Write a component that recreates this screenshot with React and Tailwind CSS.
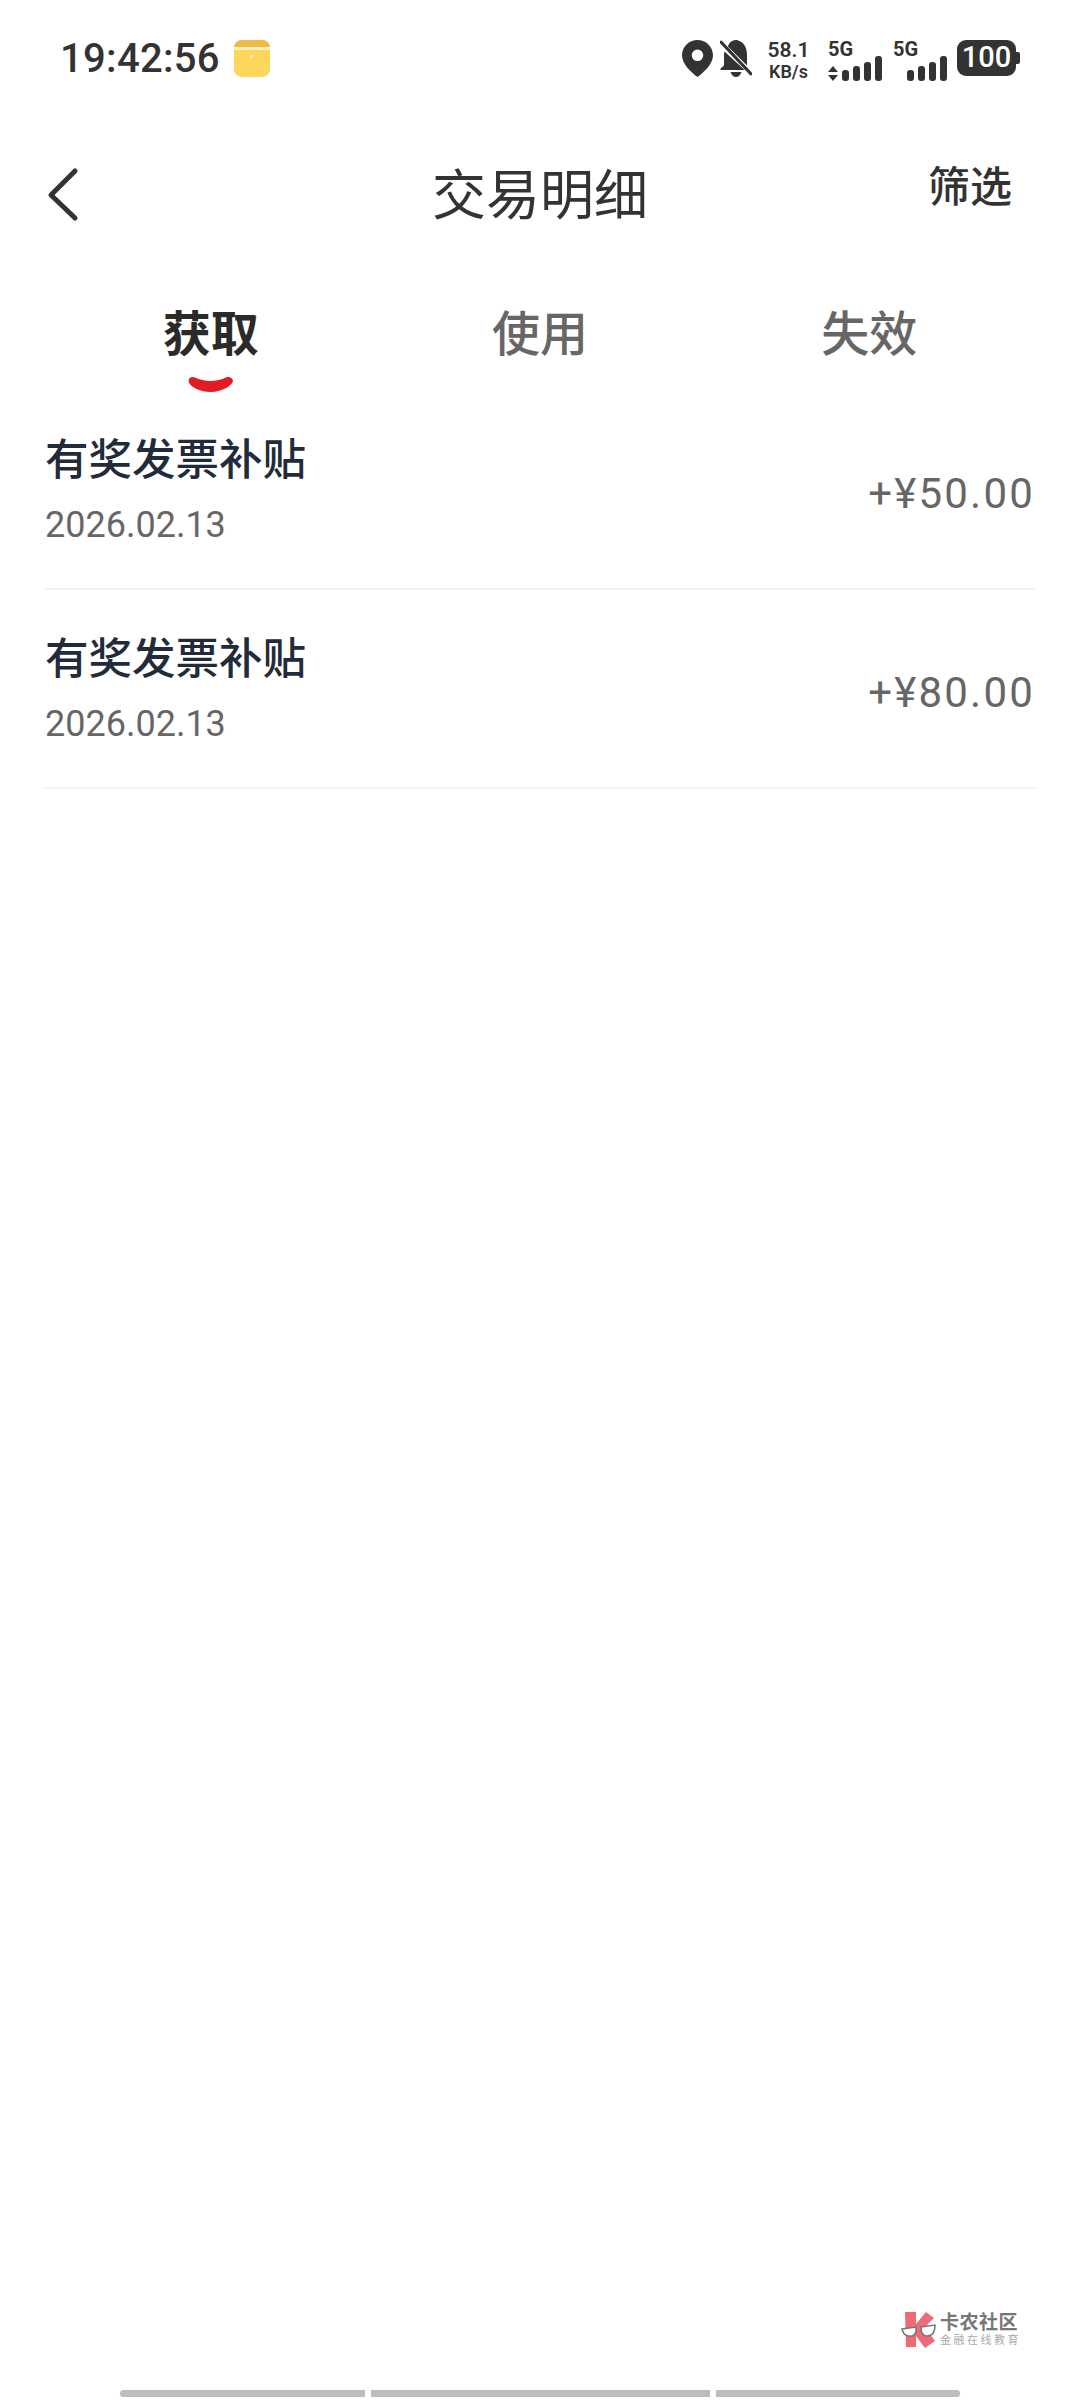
const cjk = 'font-["Roboto","Noto_Sans_CJK_SC",sans-serif]';

const rows = [
  { title: '有奖发票补贴', date: '2026.02.13', amount: '+¥50.00' },
  { title: '有奖发票补贴', date: '2026.02.13', amount: '+¥80.00' },
];

function SignalBars() {
  return (
    <div className="flex items-end gap-[4px]">
      <div className="h-[11px] w-[7px] rounded-[3px] bg-[#333]" />
      <div className="h-[15px] w-[7px] rounded-[3px] bg-[#333]" />
      <div className="h-[19px] w-[7px] rounded-[3px] bg-[#333]" />
      <div className="h-[25px] w-[7px] rounded-[3px] bg-[#333]" />
    </div>
  );
}

function StatusBar() {
  return (
    <div className="flex h-[112px] items-start justify-between pt-[40px] pl-[60px] pr-[60px]">
      <div className="flex items-center gap-[14px]">
        <span className="text-[40px] leading-[36px] font-medium tracking-[0.3px] text-[#333]">19:42:56</span>
        {/* note app icon */}
        <div className="relative h-[37px] w-[36px] overflow-hidden rounded-[8px] bg-[#fdd65a]">
          <div className="h-[7px] bg-[#ecbc48]" />
          <div className="h-[3px] bg-[#fff0bd]" />
          <div className="mx-auto mt-[5px] h-[3px] w-[3px] bg-[#fff3c8]" />
        </div>
      </div>
      <div className="flex items-start text-[#333]">
        <svg className="h-[37px] w-[31px]" viewBox="0 0 31 37">
          <path
            fillRule="evenodd"
            fill="#333"
            d="M15.5 0C7 0 0 6.8 0 15.2 0 24 8.500 31.500 15.500 37 22.500 31.500 31 24 31 15.200 31 6.800 24 0 15.500 0ZM15.500 9.500a5.800 5.800 0 1 1 0 11.600 5.800 5.800 0 0 1 0-11.600Z"
          />
        </svg>
        <svg className="ml-[7px] h-[37px] w-[32px]" viewBox="0 0 32 37">
          <path
            fill="#333"
            d="M16 0c-1.500 0-3 .5-4.300 1.300-2 1.200-3.200 3-3.800 5.200L27 25.600V15c0-6-2-11-6.500-13.500C19 .6 17.500 0 16 0ZM4.500 11.500C4 13 4 14 4 15v10.500L.5 28.500V30h24.200ZM10.500 32h11c-1 3-3 5-5.500 5s-4.500-2-5.500-5Z"
          />
          <path d="M1 2 31 34" stroke="#333" strokeWidth="3" fill="none" strokeLinecap="round" />
        </svg>
        <div className="ml-[16px] flex w-[41px] flex-col items-center font-semibold">
          <span className="text-[21px] leading-[20px]">58.1</span>
          <span className="mt-[3px] text-[18px] leading-[18px]">KB/s</span>
        </div>
        <div className="ml-[19px] flex w-[54px] flex-col">
          <span className="text-[20px] leading-[19px] font-bold">5G</span>
          <div className="mt-[-3px] flex items-end gap-[4px]">
            <svg className="h-[15px] w-[10px]" viewBox="0 0 10 15">
              <path fill="#333" d="M5 0 10 6H0ZM0 9H10L5 15Z" />
            </svg>
            <SignalBars />
          </div>
        </div>
        <div className="ml-[11px] flex w-[54px] flex-col">
          <span className="text-[20px] leading-[19px] font-bold">5G</span>
          <div className="mt-[-3px] ml-[14px] flex items-end">
            <SignalBars />
          </div>
        </div>
        <div className="ml-[10px] flex items-center">
          <div className="flex h-[36px] w-[59px] items-center justify-center rounded-[9px] bg-[#333] text-[29px] font-medium text-white">
            100
          </div>
          <div className="h-[12px] w-[4px] rounded-r-[2px] bg-[#333]" />
        </div>
      </div>
    </div>
  );
}

function Header() {
  return (
    <div className="grid h-[140px] grid-cols-[1fr_auto_1fr] items-start">
      <div className="pt-[53px] pl-[44px]">
        <svg className="h-[60px] w-[40px]" viewBox="0 0 40 60">
          <path d="M31 6 7 30 31 53" fill="none" stroke="#333" strokeWidth="5" strokeLinecap="round" strokeLinejoin="round" />
        </svg>
      </div>
      <div className="pt-[50px] text-[54px] leading-[70px] text-[#333]">交易明细</div>
      <div className="pt-[46px] pr-[68px] text-right text-[42px] leading-[60px] font-medium text-[#333]">筛选</div>
    </div>
  );
}

function Tabs() {
  return (
    <div className="mt-[48px] grid h-[92px] grid-cols-3 px-[46px] text-[48px] leading-[70px]">
      <div className="flex flex-col items-center">
        <span className="font-bold text-[#2a2a2a]">获取</span>
        <svg className="mt-[6px] h-[18px] w-[46px]" viewBox="0 0 46 18">
          <path
            fill="#e21c25"
            d="M.5 5C.5 1.500 4 0 7 1.500 16 6 29 6 38 1.500 41 0 45 2 45 5 44 10 33 16 23 16 12 16 1.500 11 .5 5Z"
          />
        </svg>
      </div>
      <div className="text-center font-medium text-[#666]">使用</div>
      <div className="text-center font-medium text-[#666]">失效</div>
    </div>
  );
}

export default function App() {
  return (
    <div className={`flex h-[2400px] w-[1080px] flex-col overflow-hidden bg-white ${cjk}`}>
      <StatusBar />
      <Header />
      <Tabs />
      <div className="mt-[-1px] flex flex-col px-[45px]">
        {rows.map((row, index) => (
          <div key={index} className="flex h-[199px] items-center justify-between border-b-2 border-[#f3f3f3]">
            <div className="mt-[-2px] flex flex-col">
              <span className="text-[43.500px] leading-[60px] font-medium text-[#222b3a]">{row.title}</span>
              <span className="mt-[12px] text-[36px] leading-[44px] text-[#666]">{row.date}</span>
            </div>
            <span className="mt-[9px] text-[42px] leading-[50px] tracking-[2.200px] text-[#666]">{row.amount}</span>
          </div>
        ))}
      </div>

      {/* watermark */}
      <div className="mt-auto flex items-center justify-end gap-[3px] pr-[59px]">
        <svg className="h-[36px] w-[36px]" viewBox="0 0 36 36">
          <path fill="#ee6b76" d="M4 0H15V12L25 0 33 6 24 15 34 29 24 36 15 24V35H5Z" />
          <path fill="#fff" stroke="#777" strokeWidth="1.500" d="M1 17 15 15C16 21 13 25 8 24 4 24 2 21 1 17ZM20 15 34 13C34 20 31 24 26 24 22 24 20 20 20 15Z" />
        </svg>
        <div className="flex flex-col">
          <span className="text-[19px] leading-[22px] font-bold tracking-[0.500px] text-[#777]">卡农社区</span>
          <span className="text-[11px] leading-[14px] tracking-[2.500px] text-[#aaa]">金融在线教育</span>
        </div>
      </div>

      {/* gesture bars */}
      <div className="mt-[42px] mb-[3px] flex gap-[6px] pl-[120px] pr-[120px]">
        <div className="h-[7px] w-[245px] rounded-l-[4px] bg-[#bdbdbd]" />
        <div className="h-[7px] flex-1 bg-[#bdbdbd]" />
        <div className="h-[7px] w-[244px] rounded-r-[4px] bg-[#bdbdbd]" />
      </div>
    </div>
  );
}
